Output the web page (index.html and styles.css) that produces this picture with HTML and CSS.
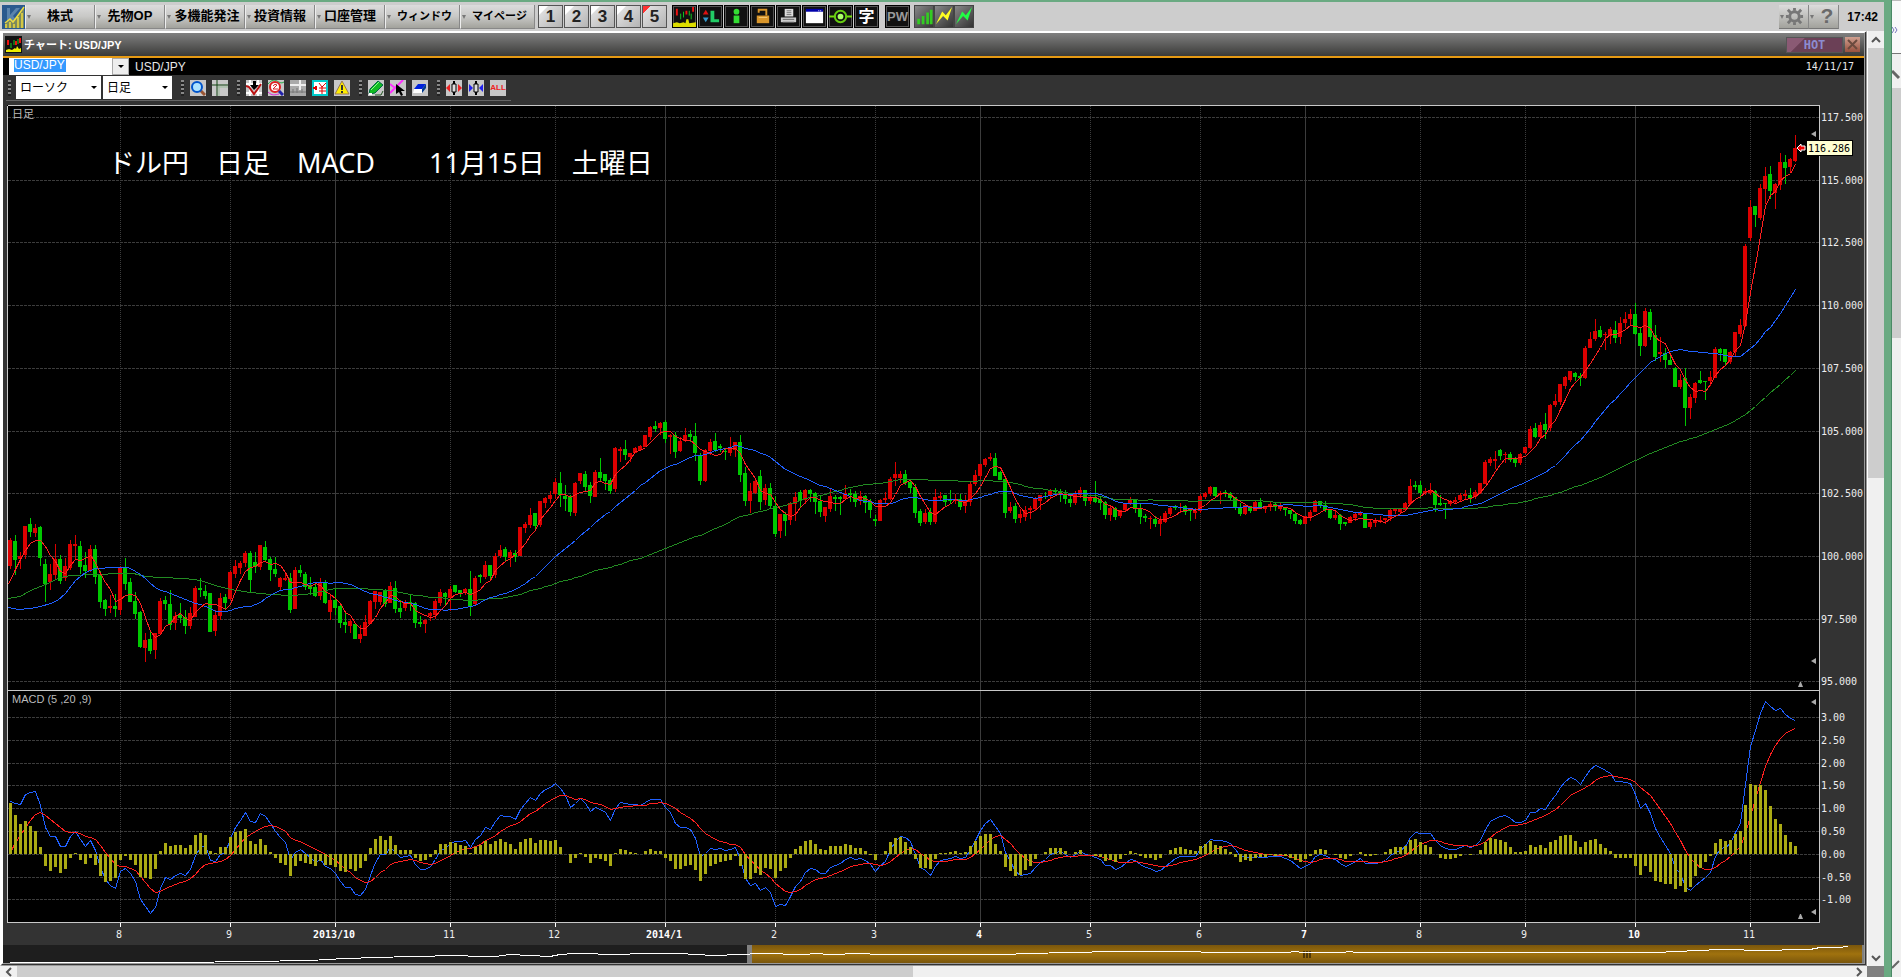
FILE: index.html
```html
<!DOCTYPE html>
<html lang="ja">
<head>
    <meta charset="UTF-8">
    <meta name="viewport" content="width=device-width, initial-scale=1.0">
    <title>チャート: USD/JPY</title>
    <link rel="stylesheet" href="styles.css">
</head>
<body>
    <main class="app">
        <header class="topbar">
            <svg class="logo" viewBox="0 0 23 24"><rect width="23" height="24" fill="#2b5a8e"/><path d="M5 3h3v7l6-7h4l-7 8 8 9H5z" fill="#5b84ad"/><path d="M3 19l5-4 3 3 6-8 5-7v20H3z" fill="#7d8a5c"/><path d="M3 18l5-4 3 3 6-8 5-7M4 23v-4M8 23v-6M12 23v-4M16 23V12M20 23V8" fill="none" stroke="#f0dc3c" stroke-width="1.500"/></svg>
            <nav class="menu">
                <button>株式</button>
                <button>先物OP</button>
                <button class="wide">多機能発注</button>
                <button>投資情報</button>
                <button>口座管理</button>
                <button class="kana">ウィンドウ</button>
                <button class="kana">マイページ</button>
            </nav>
            <div class="pages">
                <button>1</button><button>2</button><button>3</button><button>4</button><button class="current">5</button>
            </div>
            <div class="tools">
                <button aria-label="チャート"><svg viewBox="0 0 24 22"><path d="M4 3v7M14 5v4M21 1v5" stroke="#e11" stroke-width="2"/><path d="M8 8v6M11 6v6M17 5v5M19 8v6" stroke="#1c2" stroke-width="1"/><path d="M0 22v-4l4-1 3 1 4-1 2 1 1-4h2l1 4 7-1v5z" fill="#dd0"/></svg></button>
                <button aria-label="L"><svg viewBox="0 0 24 22"><path d="M4 9l3-5 3 5z" fill="#d11"/><path d="M4 12l3 5 3-5z" fill="#39c"/><path d="M12 5h4v9h5v3h-9z" fill="#2c6"/></svg></button>
                <button aria-label="情報"><svg viewBox="0 0 24 22"><circle cx="12" cy="6" r="3" fill="#3d3"/><path d="M9 10h6v8H9z" fill="#3d3"/></svg></button>
                <button aria-label="ロック"><svg viewBox="0 0 24 22"><path d="M8 7V4h8v6" fill="none" stroke="#d9962b" stroke-width="2"/><rect x="6" y="10" width="13" height="8" fill="#d9962b"/><path d="M8 12h9" stroke="#f3c875"/></svg></button>
                <button aria-label="印刷"><svg viewBox="0 0 24 22"><path d="M8 3h9v8H8z" fill="#ddd"/><path d="M10 5h5M10 7h5M10 9h5" stroke="#777"/><path d="M4 12h16v5H4z" fill="#ccc"/><path d="M6 14h12M6 17h12" stroke="#666"/></svg></button>
                <button aria-label="ウィンドウ"><svg viewBox="0 0 24 22"><path d="M3 4h18v14H3z" fill="#fff"/><path d="M3 3h18v3H3z" fill="#00a"/><path d="M16 5h1M18 5h1" stroke="#fff"/></svg></button>
                <button aria-label="接続"><svg viewBox="0 0 24 22"><path d="M0 11h7M17 11h8" stroke="#7d1" stroke-width="2"/><circle cx="12" cy="11" r="6" fill="none" stroke="#6c1" stroke-width="2"/><circle cx="12" cy="11" r="3" fill="#af6"/></svg></button>
                <button class="kanji">字</button>
                <button class="pw">PW</button>
            </div>
            <div class="signals">
                <button aria-label="出来高"><svg viewBox="0 0 20 23"><path d="M4 20v-6M9 20v-9M14 20V7M18 20V4" stroke="#3c2" stroke-width="3"/></svg></button>
                <button aria-label="速報"><svg viewBox="0 0 20 23"><path d="M1 20L8 6l4 4 7-9-5 15-5-5z" fill="#ff2"/></svg></button>
                <button aria-label="更新"><svg viewBox="0 0 20 23"><path d="M1 20L8 6l4 4 7-9-5 15-5-5z" fill="#2f4"/></svg></button>
            </div>
            <div class="system">
                <button aria-label="設定"><svg viewBox="0 0 20 20"><circle cx="10" cy="10" r="5" fill="none" stroke="#777" stroke-width="3"/><path d="M10 1v3M10 16v3M1 10h3M16 10h3M3 3l3 3M14 14l3 3M3 17l3-3M14 6l3-3" stroke="#777" stroke-width="3"/></svg></button>
                <button class="help">?</button>
            </div>
            <time class="clock">17:42</time>
        </header>

        <div class="workspace">
            <section class="window">
                <div class="titlebar">
                    <svg class="win-icon" viewBox="0 0 17 17"><rect width="17" height="17" fill="#111"/><path d="M3 4v5M11 5v4M15 2v5" stroke="#e11" stroke-width="2"/><path d="M6 7v5M9 4v5M13 3v5" stroke="#1c2"/><path d="M1 16v-2l3-1 3 1 3-2 1 1 1-3 2 3 2-1v4z" fill="#ee0"/></svg>
                    <h1>チャート: USD/JPY</h1>
                    <button class="hot">HOT</button>
                    <button class="close" aria-label="閉じる"><svg viewBox="0 0 15 15"><path d="M3 3l9 9M12 3l-9 9" stroke="#6b4a3e" stroke-width="2"/></svg></button>
                </div>
                <div class="symbolbar">
                    <div class="combo">
                        <input id="symbol" type="text" value="USD/JPY" aria-label="銘柄">
                        <button aria-label="銘柄一覧"></button>
                    </div>
                    <label for="symbol">USD/JPY</label>
                    <time>14/11/17</time>
                </div>
                <div class="chartbar">
                    <div class="chartbar-inner">
                        <i class="grip"></i>
                        <div class="select type"><select aria-label="種類"><option>ローソク</option></select></div>
                        <div class="select period"><select aria-label="足"><option>日足</option></select></div>
                        <i class="grip"></i>
                        <div class="group">
                            <button aria-label="拡大"><svg viewBox="0 0 16 16"><path d="M10 10l5 5" stroke="#953" stroke-width="3"/><circle cx="7" cy="7" r="5" fill="#aee4ff" stroke="#05c" stroke-width="2"/></svg></button>
                            <button aria-label="十字線"><svg viewBox="0 0 16 16"><path d="M0 5h16M5 0v16" stroke="#141"/><path d="M6 7h10M7 6v10" stroke="#9b9"/></svg></button>
                        </div>
                        <i class="grip"></i>
                        <div class="group">
                            <button aria-label="指標"><svg viewBox="0 0 16 16"><path d="M0 4h16M0 13h16M4 0v16M12 0v16" stroke="#fff" stroke-width="2"/><path d="M0 6l3 1 5 7 3-4 4-6" fill="none" stroke="#b11" stroke-width="2"/><path d="M7 1h3v4h3L8 10 4 5h3z" fill="#000"/></svg></button>
                            <button aria-label="比較"><svg viewBox="0 0 16 16"><path d="M0 4c4-5 7-4 9-3s4 3 7 1" fill="none" stroke="#2a4"/><path d="M0 12c4 4 7 3 11 2" fill="none" stroke="#d2d"/><circle cx="7" cy="7" r="5" fill="#fff" stroke="#d22" stroke-width="2"/><path d="M5 6q2-3 4-1L5 9h5" fill="none" stroke="#d22"/><path d="M11 11l4 4" stroke="#22a" stroke-width="3"/></svg></button>
                            <button aria-label="目盛"><svg viewBox="0 0 16 16"><rect width="16" height="16" fill="#aaa"/><path d="M0 5h16M10 0v10" stroke="#eee" stroke-width="2"/><path d="M0 12h16M3 9v4M7 8v5M12 9v4" stroke="#777"/></svg></button>
                            <button aria-label="円表示"><svg viewBox="0 0 16 16"><rect x="1" y="1" width="14" height="14" fill="#fff" stroke="#0cc" stroke-width="2"/><path d="M1 8h4M4 6v4" stroke="#d00" stroke-width="2"/><path d="M7 3l3 4 4-4M10 7v7M7 8h7M7 11h7" fill="none" stroke="#d00" stroke-width="1"/></svg></button>
                            <button aria-label="警告"><svg viewBox="0 0 16 16"><path d="M8 1l7 13H1z" fill="#fe0" stroke="#975"/><path d="M8 5v5M8 11v2" stroke="#333" stroke-width="2"/></svg></button>
                        </div>
                        <i class="grip"></i>
                        <div class="group">
                            <button aria-label="描画"><svg viewBox="0 0 16 16"><path d="M1 14l1-5 8-8 5 4-8 8z" fill="#1b2" stroke="#064"/><path d="M3 10l8-8" stroke="#8f8"/><path d="M1 14h3" stroke="#fff" stroke-width="2"/><path d="M7 15h6l2-4" fill="none" stroke="#252"/></svg></button>
                            <button aria-label="選択"><svg viewBox="0 0 16 16"><path d="M0 13L13 0M0 4l5 4" stroke="#f3f" stroke-width="2"/><path d="M6 4v10l3-2 2 4 2-1-2-4h4z" fill="#000"/></svg></button>
                            <button aria-label="消去"><svg viewBox="0 0 16 16"><path d="M2 9l4-5h8l-4 5z" fill="#02d"/><path d="M2 9h8v4H1z" fill="#fff"/><path d="M10 9l4-5v4l-4 5z" fill="#013a90"/></svg></button>
                        </div>
                        <i class="grip"></i>
                        <div class="group">
                            <button aria-label="広げる"><svg viewBox="0 0 16 16"><path d="M8 1v14" stroke="#000" stroke-width="2"/><path d="M6 4h4v8H6z" fill="#ddd" stroke="#000"/><path d="M4 4v8L0 8zM12 4v8l4-4z" fill="#e22"/></svg></button>
                            <button aria-label="狭める"><svg viewBox="0 0 16 16"><path d="M8 1v14" stroke="#000" stroke-width="2"/><path d="M6 4h4v8H6z" fill="#ddd" stroke="#000"/><path d="M1 4v8l4-4zM15 4v8l-4-4z" fill="#22e"/></svg></button>
                            <button class="all">ALL</button>
                        </div>
                    </div>
                </div>
                <div class="chart">
                    <svg id="chart"></svg>
                    <p class="note">ドル円　日足　MACD　　11月15日　土曜日</p>
                </div>
                <div class="navigator"><svg id="navigator"></svg></div>
            </section>
            <div class="scroll vertical">
                <button aria-label="上へ"><svg viewBox="0 0 10 10"><path d="M1 7l4-4 4 4" fill="none" stroke="#555" stroke-width="2"/></svg></button>
                <div class="thumb"></div>
                <button aria-label="下へ"><svg viewBox="0 0 10 10"><path d="M1 3l4 4 4-4" fill="none" stroke="#555" stroke-width="2"/></svg></button>
            </div>
            <div class="scroll horizontal">
                <button aria-label="左へ"><svg viewBox="0 0 10 10"><path d="M7 1L3 5l4 4" fill="none" stroke="#555" stroke-width="2"/></svg></button>
                <div class="thumb"></div>
                <button aria-label="右へ"><svg viewBox="0 0 10 10"><path d="M3 1l4 4-4 4" fill="none" stroke="#555" stroke-width="2"/></svg></button>
            </div>
            <div class="corner"></div>
        </div>
    </main>
    <div class="frame"></div>
    <aside class="behind">
        <div class="behind-top"><svg viewBox="0 0 9 10"><path d="M0 2l2 3-2 3M3 2l2 3-2 3" fill="none" stroke="#77b"/></svg></div>
        <div class="behind-button"><svg viewBox="0 0 9 10"><path d="M0 1l7 7" stroke="#666" stroke-width="3"/></svg></div>
        <div class="behind-thumb"></div>
        <div class="behind-end"><svg viewBox="0 0 9 10"><path d="M0 9l7-7" stroke="#666" stroke-width="2"/></svg></div>
    </aside>
    <script src="chart.js"></script>
</body>
</html>
```
FILE: styles.css
```css
* {
    box-sizing: border-box;
}

body {
    display: flex;
    height: 100vh;
    margin: 0;
    overflow: hidden;
    background: #cdcdcd;
    font-family: "Liberation Sans", "Noto Sans CJK JP", sans-serif;
    font-size: 12px;
}

button {
    margin: 0;
    padding: 0;
    border: 0;
    font-family: inherit;
}

svg {
    display: block;
}

.app {
    flex: 1;
    min-width: 0;
    display: flex;
    flex-direction: column;
    border-top: 2px solid #6aaa82;
}

.frame {
    flex: 0 0 8px;
    background: #6aaa82;
    border-right: 1px solid #4a8a66;
}

/* Top bar */
.topbar {
    display: flex;
    flex: 0 0 29px;
    align-items: center;
    padding: 0 6px 0 2px;
    background: #cdcdcd;
}

.logo {
    width: 23px;
    height: 24px;
}

.menu {
    display: flex;
    height: 24px;
}

.menu button {
    position: relative;
    width: 70px;
    background: linear-gradient(#dcdcdc, #c8c8c6 50%, #a2a29c);
    border-left: 1px solid #eee;
    border-right: 1px solid #888;
    border-bottom: 1px solid #888;
    color: #000;
    font-size: 13px;
    font-weight: bold;
    line-height: 20px;
    white-space: nowrap;
}

.menu .wide {
    width: 80px;
    padding-left: 4px;
}

.menu .kana {
    width: 75px;
    padding-left: 4px;
    font-size: 11px;
}

.menu button::before,
.system button::before {
    content: "";
    position: absolute;
    left: 1px;
    top: 10px;
    border: 2px solid transparent;
    border-top: 4px solid #777;
}

.pages {
    display: flex;
    gap: 1px;
    margin-left: 3px;
}

.pages button {
    width: 25px;
    height: 23px;
    background: linear-gradient(135deg, #fff 20%, #ddd 21%, #b4b4b4);
    border: 1px solid #555;
    color: #222;
    font-size: 17px;
    font-weight: bold;
    line-height: 21px;
}

.pages button.current {
    background: linear-gradient(135deg, #f33 16%, #ddd 17%, #b4b4b4);
}

.tools {
    display: flex;
    gap: 1px;
    margin-left: 5px;
}

.tools button {
    width: 25px;
    height: 23px;
    background: #111;
    border: 1px solid #000;
    box-shadow: inset 0 0 0 1px #555;
    color: #fff;
}

.tools svg,
.signals svg {
    width: 100%;
    height: 100%;
}

.tools .kanji {
    font-size: 16px;
    font-weight: bold;
    line-height: 18px;
}

.tools .pw {
    margin-left: 5px;
    color: #999;
    font-size: 13px;
    font-weight: bold;
    line-height: 20px;
}

.signals {
    display: flex;
    margin-left: 4px;
}

.signals button {
    width: 20px;
    height: 23px;
    background: linear-gradient(135deg, #888, #333);
    border: 1px solid #444;
}

.system {
    display: flex;
    margin-left: auto;
}

.system button {
    position: relative;
    width: 30px;
    height: 24px;
    padding-left: 6px;
    background: linear-gradient(#dcdcdc, #a2a29c);
    border-right: 1px solid #888;
    border-bottom: 1px solid #777;
    color: #6a6a6a;
}

.system svg {
    width: 19px;
    height: 19px;
}

.system .help {
    font-size: 21px;
    font-weight: bold;
    line-height: 20px;
}

.clock {
    margin-left: 8px;
    font: bold 12px "Liberation Sans", sans-serif;
}

/* Workspace with its scrollbars */
.workspace {
    flex: 1;
    min-height: 0;
    display: grid;
    grid-template-columns: minmax(0, 1fr) 17px;
    grid-template-rows: minmax(0, 1fr) 11px;
}

.window {
    display: flex;
    flex-direction: column;
    min-height: 0;
    background: #333;
    border: solid #fff;
    border-width: 2px 3px 1px 3px;
    border-right: 3px double #999;
    border-bottom: 3px double #999;
}

.titlebar {
    display: flex;
    align-items: center;
    gap: 2px;
    flex: 0 0 25px;
    padding: 0 4px 0 2px;
    background: linear-gradient(#808080, #3a3a38);
    border-bottom: 2px solid #e69a14;
}

.win-icon {
    width: 17px;
    height: 17px;
}

.titlebar h1 {
    margin: 0;
    color: #fff;
    font-size: 11px;
    line-height: 20px;
}

.hot {
    width: 57px;
    height: 16px;
    margin-left: auto;
    background: linear-gradient(135deg, #8a5a74 12px, #6b4056 13px);
    border: 1px solid #555;
    color: #8c8cd0;
    font: bold 12px/14px "DejaVu Sans Mono", monospace;
}

.close {
    width: 15px;
    height: 15px;
    background: linear-gradient(#d0a090, #98513f);
}

.close svg {
    width: 100%;
}

.symbolbar {
    display: flex;
    align-items: center;
    flex: 0 0 17px;
    gap: 6px;
    padding: 0 10px 0 6px;
    background: #000;
    color: #e8e8e8;
    font-size: 12px;
}

.symbolbar time {
    margin-left: auto;
    font: 10px "DejaVu Sans Mono", monospace;
}

.combo {
    display: flex;
    width: 120px;
    height: 17px;
    padding-left: 5px;
    background: #fff;
}

.combo input {
    width: 52px;
    height: 13px;
    margin-top: 1px;
    padding: 0;
    background: #39f;
    border: 0;
    color: #fff;
    font: 12px/13px "Liberation Sans", sans-serif;
}

.combo button {
    display: flex;
    align-items: center;
    justify-content: center;
    width: 17px;
    margin-left: auto;
    background: #eee;
    border: 1px solid #aaa;
}

.combo button::before,
.select::after {
    content: "";
    border: 3px solid transparent;
    border-top-color: #000;
    border-bottom: 0;
}

.chartbar {
    flex: 0 0 30px;
    padding-left: 3px;
}

.chartbar-inner {
    display: inline-flex;
    align-items: center;
    height: 26px;
    padding-right: 5px;
    border-bottom: 1px solid #666;
}

.grip {
    width: 3px;
    height: 16px;
    margin-left: 9px;
    margin-right: 6px;
    background: repeating-linear-gradient(#888 0 2px, #222 2px 4px);
}

.grip:first-child {
    margin-left: 2px;
    margin-right: 5px;
}

.select {
    position: relative;
    height: 23px;
}

.select::after {
    position: absolute;
    right: 4px;
    top: 10px;
}

.select select {
    width: 100%;
    height: 23px;
    padding: 0 4px;
    appearance: none;
    background: #fff;
    border: 0;
    border-radius: 0;
    color: #000;
    font: 12px "Liberation Sans", "Noto Sans CJK JP", sans-serif;
}

.type {
    width: 85px;
    margin-right: 2px;
}

.period {
    width: 69px;
}

.group {
    display: flex;
    gap: 6px;
}

.group button {
    width: 16px;
    height: 16px;
    background: #c8c8c8;
}

.group .all {
    color: #e22;
    font: bold 8px "Liberation Sans", sans-serif;
}

/* Chart */
.chart {
    position: relative;
    flex: 1;
    min-height: 0;
}

.chart svg {
    position: absolute;
    width: 100%;
    height: 100%;
}

.note {
    position: absolute;
    left: 105px;
    top: 38px;
    margin: 0;
    color: #fff;
    font: 27px/40px "Noto Sans", "Noto Sans CJK JP", sans-serif;
    white-space: nowrap;
}

#chart text {
    fill: #eee;
    font: 10px "DejaVu Sans Mono", monospace;
}

#chart .year {
    fill: #fff;
    font-weight: bold;
}

#chart .caption {
    fill: #bbb;
    font: 11px "Liberation Sans", "Noto Sans CJK JP", sans-serif;
}

#chart .tag {
    fill: #000;
}

.navigator {
    flex: 0 0 18px;
    background: #1e1e1e;
}

.navigator svg {
    width: 100%;
    height: 18px;
}

/* Scrollbars */
.scroll {
    display: flex;
    background: #f0f0f0;
}

.scroll button {
    display: flex;
    align-items: center;
    justify-content: center;
    flex: 0 0 17px;
    background: #f0f0f0;
}

.scroll svg {
    width: 10px;
    height: 10px;
}

.scroll .thumb {
    background: #cdcdcd;
    margin-right: auto;
}

.vertical {
    flex-direction: column;
    border-left: 1px solid #fff;
}

.vertical .thumb {
    flex: 0 0 46%;
    width: 100%;
    margin: 0 0 auto;
}

.horizontal .thumb {
    flex: 0 0 48%;
}

.corner {
    background: #808080;
}

/* Strip of the window underneath */
.behind {
    display: flex;
    flex-direction: column;
    flex: 0 0 9px;
    background: #f0f0f0;
}

.behind svg {
    width: 9px;
    height: 10px;
}

.behind-top {
    height: 54px;
    padding-top: 24px;
    background: #fafafa;
    border-top: 1px solid #bbb;
    border-bottom: 1px solid #777;
}

.behind-button {
    height: 34px;
    padding-top: 16px;
}

.behind-thumb {
    flex: 0 0 250px;
    background: #cdcdcd;
}

.behind-end {
    margin-top: auto;
    padding-bottom: 8px;
}
```
FILE: chart.js
```js
// Chart space: the size the data below is given in
const AREA = { x: 3, y: 105, w: 1861, h: 840 };
const PLOT = { left: 7, right: 1819, top: 105, split: 690, bottom: 922 };
const ZERO = 854;          // zero line of the MACD panel
const MACD_SCALE = 1.82;   // MACD panel units per price panel unit

// One candle per day: r = up, g = down, then high, body top, body bottom, low
const candles = `
r538,540,566,569 g535,541,560,575 r552,556,559,569 r526,526,555,559 g518,524,532,537 r524,528,533,537
g526,527,558,566 g559,564,584,602 r564,574,582,590 r544,559,575,580 g555,559,581,584 r558,566,578,581
r540,544,568,570 r535,544,546,560 g541,546,567,574 g552,565,571,578 r545,549,571,572 g545,549,577,584
g571,574,602,608 g599,600,609,616 r595,606,608,613 g594,606,609,617 r566,567,610,615 g558,568,584,590
g578,582,602,602 g592,601,614,619 g611,612,647,648 r633,640,648,662 g632,639,651,654 r633,633,650,659
r598,601,634,634 g596,600,604,610 g590,604,625,630 r612,616,623,630 g603,615,618,623 g610,617,626,634
r607,613,626,629 r586,588,617,617 g578,588,590,597 g585,591,596,599 g593,593,632,632 r610,615,631,636
r593,598,616,620 g594,597,603,610 r571,572,599,600 r560,566,574,578 r561,563,568,574 r551,553,563,567
g551,553,580,592 g552,562,567,573 r545,545,567,570 g541,547,560,562 g557,559,570,581 g557,569,574,577
r577,578,587,590 r572,578,580,581 g573,578,610,613 r567,570,609,609 g565,570,573,577 g572,574,587,590
g577,585,589,595 g583,587,596,597 r578,582,596,600 g580,582,603,604 r594,600,612,620 g588,600,608,615
g603,606,623,628 g612,622,625,633 r619,621,626,633 g624,624,639,639 r625,634,639,643 r615,622,636,636
r600,601,624,624 r591,591,602,609 r592,592,602,605 g589,590,604,607 r582,586,603,603 g581,588,609,613
g600,608,612,618 r600,602,608,611 g594,602,604,611 g602,603,623,628 g616,622,624,627 r619,620,624,633
r612,613,616,621 r599,601,615,619 r589,592,603,606 g592,593,597,605 r586,589,598,611 g585,585,592,593
g590,590,593,597 r588,589,593,595 g571,589,606,616 r576,578,604,606 g574,575,577,583 r561,565,577,579
g565,565,576,580 r553,556,575,578 r545,550,556,558 g547,549,557,562 r550,552,558,567 g550,553,557,562
r527,527,556,556 r522,524,528,533 r508,515,525,528 g513,513,526,529 r501,501,525,527 r497,498,503,508
r491,495,499,503 r478,482,494,499 g472,483,495,507 g485,496,499,511 g495,497,512,516 r482,483,513,516
r473,473,481,484 g471,474,487,492 g482,485,496,503 r470,472,497,497 g458,472,478,481 g474,474,481,490
g478,480,491,494 r447,448,489,492 r447,449,451,462 g440,449,455,460 r453,453,457,462 r447,448,453,453
r445,446,450,450 r435,435,447,447 r426,427,437,440 g421,426,429,432 r422,423,428,435 g420,422,439,443
r434,435,437,454 g432,435,452,458 r437,441,451,452 r428,435,441,442 g430,434,437,442 g423,436,453,461
g453,456,481,485 r449,450,481,482 r439,442,451,455 g433,441,450,452 g444,446,448,452 g448,451,452,460
r437,448,453,456 r442,442,450,457 g435,442,475,482 g467,473,501,506 r483,491,501,513 r479,481,493,494
g470,476,502,510 r484,488,500,505 g483,488,506,508 g496,506,534,537 r514,514,531,538 g512,514,521,536
r502,503,520,525 r492,497,504,521 g490,492,501,507 r489,490,500,504 g489,490,494,502 g492,493,502,514
g496,501,512,517 r507,507,516,522 r488,496,509,512 g495,497,499,511 g496,497,499,515 r485,493,499,499
g489,493,495,502 g491,494,502,507 r491,496,501,505 g495,496,503,513 g499,501,510,518 g515,519,521,526
r499,500,521,521 r492,498,500,503 r477,479,499,500 r462,474,478,486 r471,474,478,483 g470,474,483,485
g479,482,488,493 g484,487,513,518 g509,511,523,526 r509,513,522,524 g508,512,522,525 r489,497,522,524
r492,496,498,501 g495,495,502,506 g490,499,501,504 r494,499,501,504 g494,499,507,510 r495,501,506,513
r482,484,502,506 r470,475,484,486 r464,464,476,479 r458,459,465,467 r453,457,459,461 g453,458,476,476
g471,472,480,480 g478,479,513,518 r502,507,511,513 g503,506,519,523 r509,514,518,523 r506,510,517,521
r506,508,510,519 r497,499,509,511 r495,495,501,510 g492,496,497,499 r489,490,496,499 g488,491,492,496
g489,491,493,502 g490,494,499,504 g494,499,503,507 r491,493,503,505 r487,490,495,498 g490,490,501,506
r495,497,501,504 g481,498,502,503 g497,499,503,510 g501,502,515,519 r505,508,515,521 g507,508,517,520
r510,510,516,518 r503,503,510,511 r497,499,503,505 g499,499,509,513 g503,509,517,524 g514,516,518,522
r516,518,519,529 g516,519,524,527 r516,520,524,536 r511,513,522,523 r506,508,514,516 g505,507,508,510
r503,507,508,513 g505,506,512,515 g509,509,511,521 r508,511,513,519 r494,496,511,513 r492,493,497,499
r486,487,494,496 g487,487,496,498 r491,493,495,504 g490,492,494,497 g492,493,498,500 g497,497,507,510
g503,507,514,516 r504,505,514,515 g506,506,511,513 r501,502,511,511 g498,502,507,509 r507,507,509,513
r502,504,506,511 g503,504,507,511 r502,506,509,511 g507,507,510,516 g510,510,514,519 g513,514,521,524
g519,520,524,525 r516,516,524,524 r510,512,517,521 r500,501,512,512 g501,501,506,508 g501,505,510,512
g510,510,518,519 r510,515,518,520 g514,515,524,530 g522,522,524,526 r516,517,523,523 r513,514,518,521
r511,513,515,516 g514,514,528,528 r520,522,527,529 r518,521,523,527 r516,520,522,523 r518,518,520,524
r509,510,518,521 r509,509,511,514 r508,509,512,514 r502,503,510,511 r479,486,504,505 g481,485,487,490
g481,485,493,498 r488,491,493,495 r483,490,493,495 g490,491,505,512 g495,503,505,506 g503,503,504,519
r500,501,504,506 r497,500,502,504 r493,495,500,501 r490,494,496,500 g488,495,498,503 r490,492,497,499
r483,483,493,494 r460,462,484,484 r457,459,463,466 r451,459,461,469 g449,450,456,460 r452,454,455,463
g452,454,460,462 g457,459,463,467 r453,454,463,465 r447,447,453,454 r426,429,448,449 g423,428,437,438
r422,425,437,438 g413,424,430,439 r404,405,428,431 r394,401,405,407 r384,384,402,405 r376,377,386,389
r371,371,380,382 g372,373,377,381 g373,376,378,386 r346,348,378,379 r332,339,348,348 r319,331,339,341
g326,330,337,338 r332,334,335,350 r327,329,336,344 g321,330,338,343 r317,323,337,344 r312,319,323,328
r309,314,319,325 g303,314,334,335 g328,333,346,356 r308,311,346,347 g309,312,337,340 g325,335,357,361
r337,352,354,362 g348,353,360,368 g355,360,365,365 g367,368,387,387 r374,380,387,389 g368,378,408,426
r394,397,408,419 r382,383,398,403 g371,380,383,384 g381,381,382,400 r371,377,381,386 r347,349,378,378
g348,349,353,361 g349,349,362,366 r351,352,362,364 r332,332,352,357 r319,325,334,337 r244,246,326,327
r200,207,238,241 g206,206,215,227 r184,188,218,220 r167,176,189,204 g166,174,191,199 r183,184,193,209
r153,162,185,190 g155,162,168,184 r158,159,167,173 r135,148,161,162
`.trim().split(/\s+/).map((token, i) => {
    const [high, top, bottom, low] = token.slice(1).split(',').map(Number);
    const up = token[0] === 'r';
    return { x: 10 + i * 5, up, high, top, bottom, low, close: up ? top : bottom };
});

// Averages carried over from the days before the first candle
const averages = [
    { days: 75, color: '#228b22', lead: [[8, 598], [20, 596], [30, 590], [45, 584], [60, 577], [70, 575], [120, 573], [133, 573], [145, 576], [160, 577], [185, 578], [200, 580], [215, 585], [230, 589], [250, 592], [270, 594], [290, 595], [305, 594], [320, 591], [335, 588], [360, 588], [375, 589]] },
    { days: 25, color: '#2060ff', lead: [[8, 607], [18, 609], [30, 608], [40, 606], [50, 603], [57, 600], [65, 593], [75, 580], [85, 572], [95, 568], [115, 567], [127, 567]] },
    { days: 5, color: '#ff2020', lead: [[8, 584], [15, 569], [20, 559], [25, 550]] }
];

const months = [
    [120, '8'], [230, '9'], [335, '2013/10', 1], [450, '11'], [555, '12'], [665, '2014/1', 1], [775, '2'], [875, '3'],
    [980, '4', 1], [1090, '5'], [1200, '6'], [1305, '7', 1], [1420, '8'], [1525, '9'], [1635, '10', 1], [1750, '11']
];

const overview = [
    [10, 962], [180, 962], [250, 961], [310, 960], [345, 958], [410, 956], [430, 956], [440, 955], [495, 956], [510, 954],
    [550, 956], [560, 954], [575, 953], [620, 954], [640, 953], [680, 953], [695, 954], [715, 955], [740, 954], [760, 953],
    [805, 954], [815, 953], [830, 954], [860, 953], [880, 954], [1000, 954], [1065, 952], [1120, 951], [1200, 951],
    [1202, 952], [1290, 952], [1292, 951], [1305, 952], [1345, 952], [1347, 951], [1358, 952], [1656, 952], [1698, 950],
    [1720, 949], [1768, 950], [1797, 949], [1810, 949], [1820, 947], [1838, 947], [1848, 946]
];

function movingAverage({ days, lead }) {
    const points = lead.slice();
    for (let i = days - 1; i < candles.length; i++) {
        const sum = candles.slice(i - days + 1, i + 1).reduce((total, c) => total + c.close, 0);
        points.push([candles[i].x, sum / days]);
    }
    return points;
}

// MACD (5, 20, 9)
function macdSeries() {
    let fast = 567, slow = 596, signal = 1;
    return candles.map((c, i) => {
        if (i > 0) {
            fast += (c.close - fast) * 2 / 6;
            slow += (c.close - slow) * 2 / 21;
            signal += (slow - fast - signal) * 2 / 10;
        }
        return { x: c.x, macd: (slow - fast) * MACD_SCALE, signal: signal * MACD_SCALE };
    });
}

function drawChart() {
    const svg = document.getElementById('chart');
    const { width, height } = svg.getBoundingClientRect();
    const X = v => Math.round((v - AREA.x) * width / AREA.w);
    const Y = v => Math.round((v - AREA.y) * height / AREA.h);
    const out = [];

    const rect = (x, y, w, h, fill) => out.push(`<rect x="${x}" y="${y}" width="${w}" height="${h}" fill="${fill}"/>`);
    const line = (x1, y1, x2, y2, color, dash) =>
        out.push(`<path d="M${x1 + 0.5} ${y1 + 0.5}L${x2 + 0.5} ${y2 + 0.5}" stroke="${color}" stroke-dasharray="${dash || 'none'}"/>`);
    const curve = (points, color) =>
        out.push(`<polyline points="${points.map(p => (X(p[0]) + 0.5) + ',' + (Y(p[1]) + 0.5)).join(' ')}" fill="none" stroke="${color}"/>`);
    const text = (x, y, label, cls, anchor) =>
        out.push(`<text x="${x}" y="${y}" class="${cls || ''}" text-anchor="${anchor || 'start'}">${label}</text>`);

    const left = X(PLOT.left), right = X(PLOT.right), top = Y(PLOT.top), split = Y(PLOT.split), bottom = Y(PLOT.bottom);
    out.push('<g shape-rendering="crispEdges">');
    rect(left, top, right - left, bottom - top, '#000');

    // grid
    const priceLines = [];
    for (let i = 0; i < 10; i++) priceLines.push([117 + i * 62.7, (117.5 - i * 2.5).toFixed(3)]);
    const macdLines = [];
    for (let i = 0; i < 9; i++) macdLines.push([717 + i * 22.8, (3 - i * 0.5).toFixed(2)]);
    priceLines.concat(macdLines).forEach(([y]) => line(left, Y(y), right, Y(y), '#3c3c3c', '3 1'));
    months.forEach(([x, , quarter]) => line(X(x), top, X(x), bottom, '#3c3c3c', quarter ? '' : '1 1'));

    candles.forEach(c => {
        const color = c.up ? '#dc0000' : '#00c800';
        rect(X(c.x), Y(c.high), 1, Y(c.low) - Y(c.high), color);
        rect(X(c.x) - 2, Y(c.top), 4, Math.max(1, Y(c.bottom) - Y(c.top)), color);
    });
    averages.forEach(a => curve(movingAverage(a), a.color));

    const series = macdSeries();
    curve(series.map(s => [s.x, ZERO - s.macd]), '#2060ff');
    curve(series.map(s => [s.x, ZERO - s.signal]), '#ff2020');
    series.forEach(s => {
        const y = Y(ZERO - (s.macd - s.signal));
        rect(X(s.x) - 1, Math.min(y, Y(ZERO)), 3, Math.abs(y - Y(ZERO)), '#aaaa14');
    });

    // frame and ticks
    line(left, top, right, top, '#c8c8c8');
    line(left, split, right, split, '#c8c8c8');
    line(left, bottom, right, bottom, '#c8c8c8');
    line(left, top, left, bottom, '#c8c8c8');
    line(right, top, right, bottom, '#c8c8c8');
    months.forEach(([x]) => line(X(x), bottom, X(x), bottom + 4, '#fff'));
    out.push('</g>');

    // range markers
    [134, 661, 702, 912].forEach(y => out.push(`<path d="M${X(1811)} ${Y(y)}l5 -3v6z" fill="#aaa"/>`));
    [687, 919].forEach(y => out.push(`<path d="M${X(1798)} ${Y(y)}l2 -5h1l2 5z" fill="#aaa"/>`));

    priceLines.forEach(([y, label]) => text(right + 2, Y(y) + 4, label));
    macdLines.forEach(([y, label]) => text(right + 2, Y(y) + 4, label));
    months.forEach(([x, label, quarter]) => text(X(x) - 1, bottom + 16, label, quarter ? 'year' : '', 'middle'));
    text(left + 5, top + 13, '日足', 'caption');
    text(left + 5, split + 13, 'MACD (5 ,20 ,9)', 'caption');

    // last price
    const last = Y(147);
    rect(X(1806), last - 7, 47, 16, '#000');
    rect(X(1806) + 1, last - 6, 45, 14, '#ffffd2');
    text(X(1806) + 2, last + 5, '116.286', 'tag');
    out.push(`<path d="M${X(1797)} ${last + 1}l4 -4v2h4v4h-4v2z" fill="#e00" stroke="#fff"/>`);
    svg.innerHTML = out.join('');
}

function drawNavigator() {
    const svg = document.getElementById('navigator');
    const { width } = svg.getBoundingClientRect();
    const X = v => Math.round((v - AREA.x) * width / AREA.w);
    const points = overview.map(([x, y]) => X(x) + ',' + (y - 944.5)).join(' ');
    const grips = [1303, 1306, 1309].map(x => `<rect x="${X(x)}" y="6" width="2" height="7" fill="#503808"/>`).join('');
    svg.innerHTML = `
        <defs><linearGradient id="gold" x2="0" y2="1"><stop offset="0" stop-color="#7a560c"/><stop offset=".5" stop-color="#a0720e"/><stop offset="1" stop-color="#7a560c"/></linearGradient></defs>
        <rect x="${X(749)}" width="${X(1862) - X(749)}" height="18" fill="url(#gold)"/>
        <rect x="${X(747)}" width="5" height="18" fill="#808080"/>
        <rect x="${X(1862)}" width="2" height="18" fill="#808080"/>
        ${grips}
        <polyline points="${points}" fill="none" stroke="#fff" shape-rendering="crispEdges"/>`;
}

function draw() {
    drawChart();
    drawNavigator();
}

draw();
window.addEventListener('resize', draw);
```
